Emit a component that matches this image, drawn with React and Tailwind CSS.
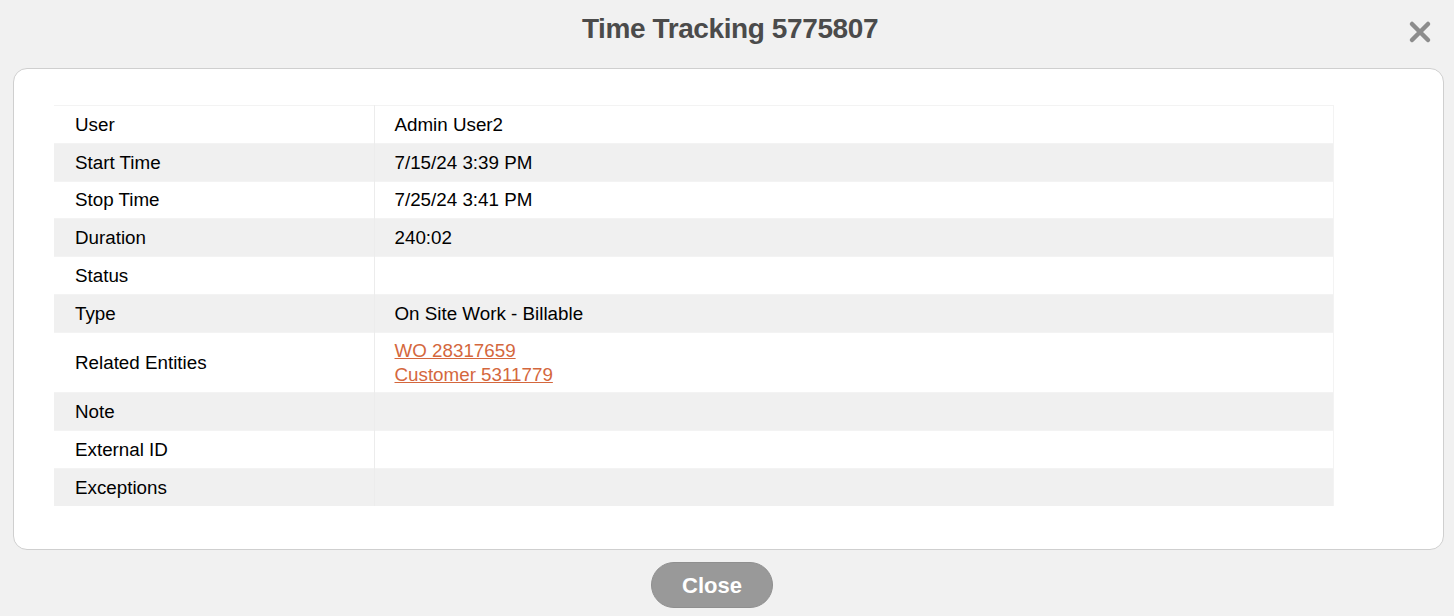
const rows = [
  { label: "User", value: "Admin User2" },
  { label: "Start Time", value: "7/15/24 3:39 PM" },
  { label: "Stop Time", value: "7/25/24 3:41 PM" },
  { label: "Duration", value: "240:02" },
  { label: "Status", value: "" },
  { label: "Type", value: "On Site Work - Billable" },
  { label: "Related Entities", links: ["WO 28317659", "Customer 5311779"] },
  { label: "Note", value: "" },
  { label: "External ID", value: "" },
  { label: "Exceptions", value: "" },
];

const App = () => {
  return (
    <div
      className="w-[1454px] h-[616px] bg-[#f1f1f1] flex flex-col overflow-hidden"
      style={{ fontFamily: '"Liberation Sans", Arial, sans-serif' }}
    >
      <div className="relative w-full h-[68px] flex items-center justify-center pl-[6px]">
        <h1 className="text-[28px] font-bold text-[#4b4b4b] tracking-[-0.4px] -mt-[10px]">
          Time Tracking 5775807
        </h1>
        <button className="absolute right-[22px] top-[20px] w-[24px] h-[24px] flex items-center justify-center">
          <svg width="24" height="24" viewBox="0 0 24 24">
            <path
              d="M4 4 L20 20 M20 4 L4 20"
              stroke="#8c8c8c"
              strokeWidth="4.5"
              strokeLinecap="round"
            />
          </svg>
        </button>
      </div>

      <div className="ml-[13px] w-[1431px] h-[482px] bg-white border border-[#cfcfcf] rounded-[14px] px-[40px] pt-[36px]">
        <table className="w-[1280px] border-collapse text-[18.8px] text-black">
          <tbody>
            {rows.map((row, i) => (
              <tr
                key={row.label}
                className={i % 2 === 0 ? "bg-white" : "bg-[#f0f0f0]"}
              >
                <td className="w-[320px] pl-[21px] py-[5.9px] leading-[25px] border-r border-[#ececec] border-t border-t-[#f3f3f3] align-middle">
                  {row.label}
                </td>
                <td className="pl-[20px] py-[5.9px] leading-[25px] border-t border-t-[#f3f3f3] border-r border-r-[#f3f3f3] align-middle">
                  {row.links ? (
                    <div className="flex flex-col">
                      {row.links.map((l) => (
                        <a
                          key={l}
                          href="#"
                          className="text-[#d4673d] underline leading-[24px] w-fit"
                        >
                          {l}
                        </a>
                      ))}
                    </div>
                  ) : (
                    row.value || "\u00a0"
                  )}
                </td>
              </tr>
            ))}
          </tbody>
        </table>
      </div>

      <div className="w-full flex justify-center pr-[30px] mt-[12px]">
        <button className="w-[122px] h-[46px] rounded-full bg-[#999999] text-white text-[22px] font-bold border border-[#8f8f8f]">
          Close
        </button>
      </div>
    </div>
  );
};

export default App;
